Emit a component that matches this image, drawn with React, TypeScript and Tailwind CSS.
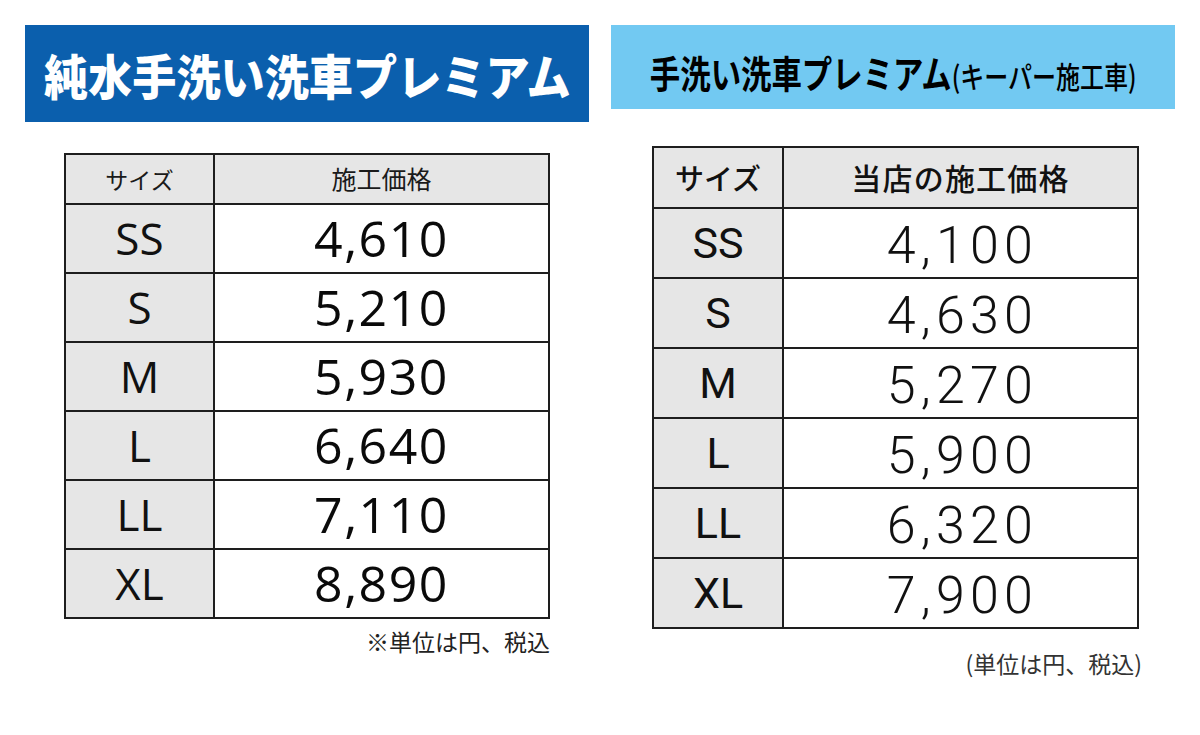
import React from "react";

const jp = '"Noto Sans CJK JP", "Noto Sans", sans-serif';

const left = [
  ["SS", "4,610"],
  ["S", "5,210"],
  ["M", "5,930"],
  ["L", "6,640"],
  ["LL", "7,110"],
  ["XL", "8,890"],
];

const right = [
  ["SS", "4,100"],
  ["S", "4,630"],
  ["M", "5,270"],
  ["L", "5,900"],
  ["LL", "6,320"],
  ["XL", "7,900"],
];

export default function App() {
  return (
    <div className="w-[1200px] h-[735px] bg-white overflow-hidden flex gap-[22px] pl-[25px] pt-[25px]" style={{ fontFamily: jp }}>
      {/* Left column */}
      <div className="w-[564px] flex flex-col">
        <div className="h-[97px] bg-[#0b5fad] flex items-center justify-center">
          <span className="inline-block text-white font-black text-[48px] leading-none scale-x-[0.92] whitespace-nowrap" style={{ fontFamily: jp }}>
            純水手洗い洗車プレミアム
          </span>
        </div>
        <div className="mt-[31px] ml-[39px] w-[486px] border-2 border-[#1e1e1e] flex flex-col">
          <div className="h-[48px] flex bg-[#e6e6e6]">
            <div className="w-[147px] flex items-center justify-center text-[23px] text-[#1a1a1a]">サイズ</div>
            <div className="flex-1 border-l-2 border-[#1e1e1e] flex items-center justify-center text-[25px] text-[#1a1a1a]">施工価格</div>
          </div>
          {left.map(([s, p]) => (
            <div key={s} className="h-[69px] flex border-t-2 border-[#1e1e1e]">
              <div className="w-[147px] bg-[#e6e6e6] flex items-center justify-center text-[44px] text-[#111] leading-none pb-[2px]" style={{ fontFamily: '"Open Sans", sans-serif' }}>
                {s}
              </div>
              <div className="flex-1 border-l-2 border-[#1e1e1e] bg-white flex items-center justify-center text-[50px] text-[#0a0a0a] leading-none tracking-[0.03em] pb-[2px]" style={{ fontFamily: '"Open Sans", sans-serif' }}>
                {p}
              </div>
            </div>
          ))}
        </div>
        <div className="w-[525px] text-right text-[23px] text-[#222] mt-[8px] leading-tight">※単位は円、税込</div>
      </div>

      {/* Right column */}
      <div className="w-[564px] flex flex-col">
        <div className="h-[84px] bg-[#72c9f2] flex items-center justify-center pt-[10px]">
          <span className="inline-flex items-baseline scale-x-[0.8] whitespace-nowrap text-black font-bold leading-none">
            <span className="text-[38px]">手洗い洗車プレミアム</span>
            <span className="text-[30px] font-medium">(キーパー施工車)</span>
          </span>
        </div>
        <div className="mt-[37px] ml-[41px] w-[487px] border-2 border-[#1e1e1e] flex flex-col">
          <div className="h-[59px] flex bg-[#e6e6e6]">
            <div className="w-[128px] flex items-center justify-center text-[29px] font-medium text-[#111]">サイズ</div>
            <div className="flex-1 border-l-2 border-[#1e1e1e] flex items-center justify-center text-[30px] font-medium tracking-[0.04em] text-[#111]">当店の施工価格</div>
          </div>
          {right.map(([s, p]) => (
            <div key={s} className="h-[70px] flex border-t-2 border-[#1e1e1e]">
              <div className="w-[128px] bg-[#e6e6e6] flex items-center justify-center text-[43px] text-[#111] leading-none" style={{ fontFamily: 'Roboto, sans-serif' }}>
                {s}
              </div>
              <div className="flex-1 border-l-2 border-[#1e1e1e] bg-white flex items-center justify-center text-[52px] font-light text-[#111] leading-none tracking-[0.1em] pt-[6px] pl-[4px]" style={{ fontFamily: 'Roboto, sans-serif' }}>
                {p}
              </div>
            </div>
          ))}
        </div>
        <div className="w-[531px] text-right text-[23px] text-[#333] mt-[20px] leading-tight">(単位は円、税込)</div>
      </div>
    </div>
  );
}
